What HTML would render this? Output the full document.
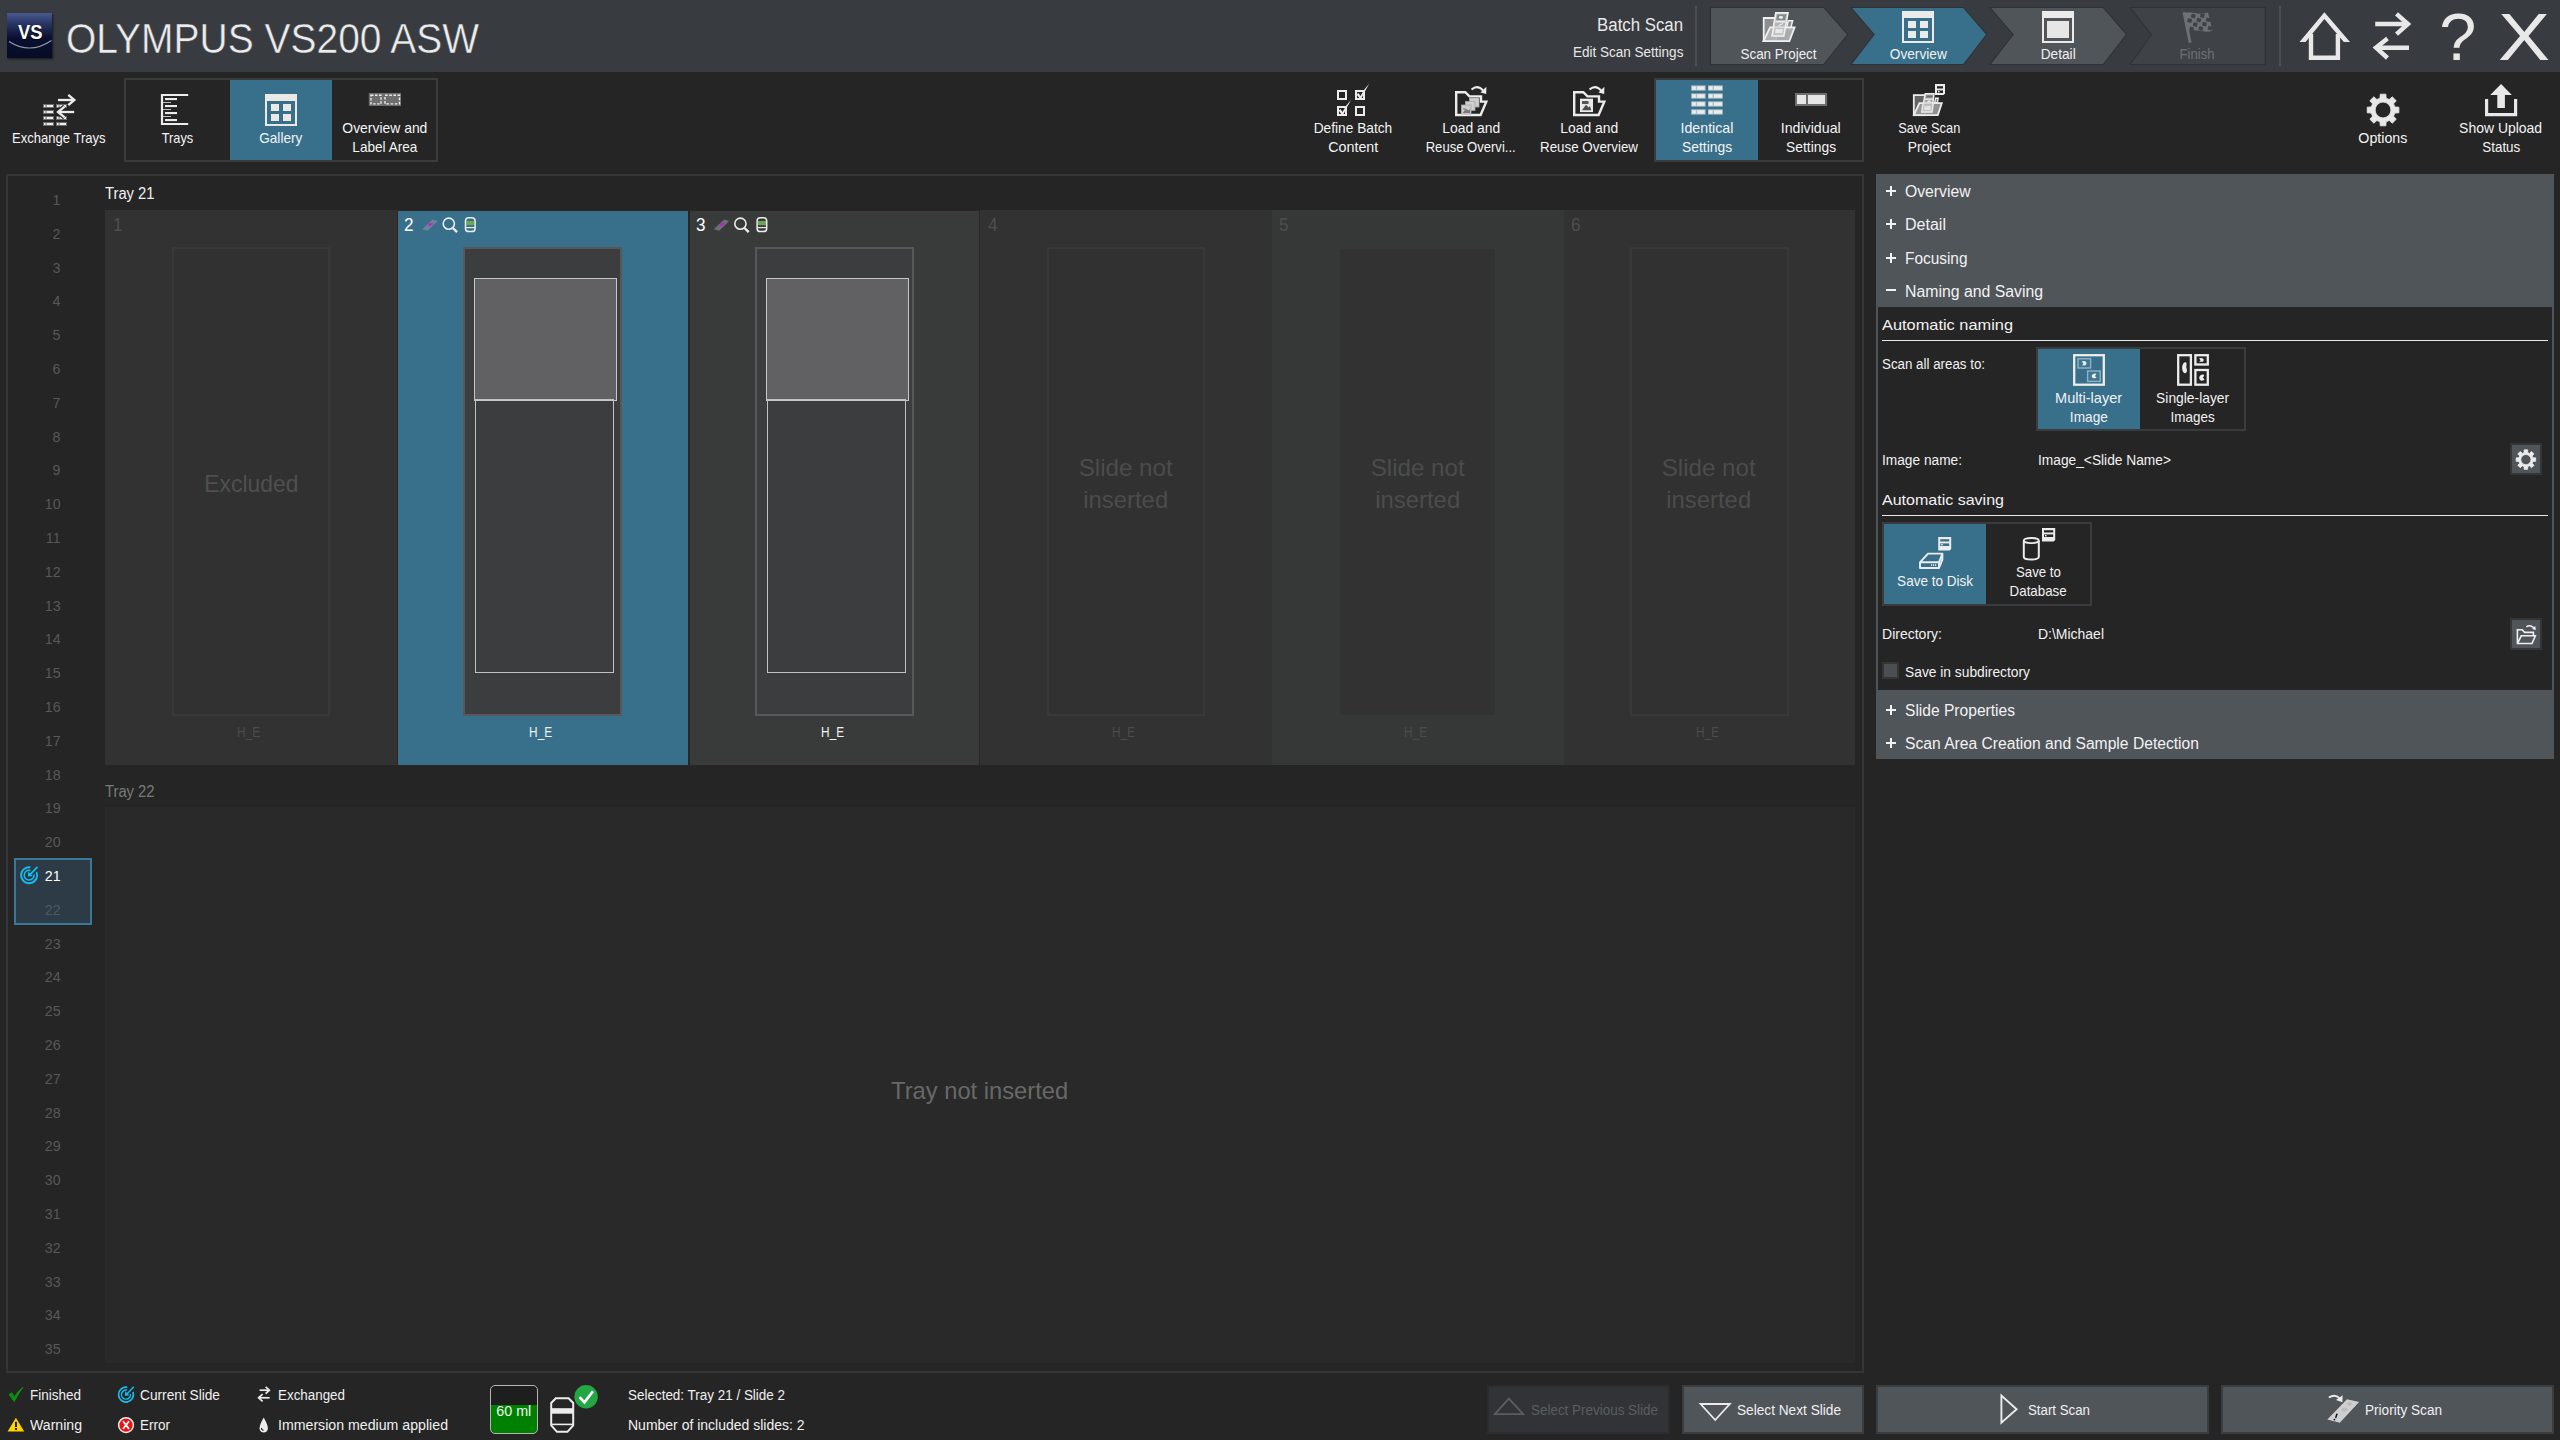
<!DOCTYPE html>
<html lang="en"><head><meta charset="utf-8"><title>OLYMPUS VS200 ASW</title>
<style>
html,body{margin:0;padding:0;background:#252525;overflow:hidden}
body{width:2560px;height:1440px;position:relative;font-family:"Liberation Sans",sans-serif;}
.a{position:absolute;box-sizing:border-box}
.t{position:absolute;white-space:nowrap;line-height:1;display:inline-block}
svg{overflow:visible}
</style></head><body>
<div class="a " style="left:0px;top:0px;width:2560px;height:72px;background:#383b3f;"></div>
<div class="a" style="left:7px;top:13px;width:45px;height:45px;background:linear-gradient(180deg,#4a5a8c 0%,#2a3768 22%,#0a1030 55%,#070b26 100%);box-shadow:1px 1px 2px rgba(0,0,0,.6)"></div>
<span class="t" style="left:17.06px;top:22px;font-size:20px;color:#fff;transform:scaleX(0.9182);transform-origin:50% 0;font-weight:bold;text-shadow:0 1px 1px #000;">VS</span>
<svg class="a" style="left:7px;top:13px;" width="45" height="45" viewBox="0 0 45 45"><path d="M2 28.5 Q23 42 44.5 27.5" fill="none" stroke="#b8bdd0" stroke-width="1.2" opacity=".8"/></svg>
<span class="t" style="left:66.00px;top:17px;font-size:43px;color:#ececec;transform:scaleX(0.9064);transform-origin:0 0;-webkit-text-stroke:0.5px #383b3f;">OLYMPUS VS200 ASW</span>
<span class="t" style="left:1590.94px;top:16px;font-size:18px;color:#e8e8e8;transform:scaleX(0.9342);transform-origin:100% 0;">Batch Scan</span>
<span class="t" style="left:1569.10px;top:45px;font-size:14px;color:#e8e8e8;transform:scaleX(0.9659);transform-origin:100% 0;">Edit Scan Settings</span>
<div class="a " style="left:1695px;top:6px;width:2px;height:60px;background:#4b4e52;"></div>
<div class="a " style="left:2279px;top:6px;width:2px;height:60px;background:#4b4e52;"></div>
<svg class="a" style="left:0px;top:0px;" width="2560" height="72" viewBox="0 0 2560 72"><polygon points="1711.00,8.00 1823.50,8.00 1847.00,34.60 1823.50,63.90 1711.00,63.90" fill="none" stroke="#2f3235" stroke-width="2.2" stroke-linejoin="miter"/><polygon points="1711.00,8.00 1823.50,8.00 1847.00,34.60 1823.50,63.90 1711.00,63.90" fill="#50555a"/><polygon points="1852.00,8.00 1963.20,8.00 1986.00,34.60 1963.20,63.90 1852.00,63.90 1874.80,34.60" fill="none" stroke="#2f3235" stroke-width="2.2" stroke-linejoin="miter"/><polygon points="1852.00,8.00 1963.20,8.00 1986.00,34.60 1963.20,63.90 1852.00,63.90 1874.80,34.60" fill="#38708c"/><polygon points="1991.00,8.00 2103.00,8.00 2125.80,34.60 2103.00,63.90 1991.00,63.90 2013.80,34.60" fill="none" stroke="#2f3235" stroke-width="2.2" stroke-linejoin="miter"/><polygon points="1991.00,8.00 2103.00,8.00 2125.80,34.60 2103.00,63.90 1991.00,63.90 2013.80,34.60" fill="#50555a"/><polygon points="2131.20,8.00 2264.70,8.00 2264.70,63.90 2131.20,63.90 2152.20,34.60" fill="none" stroke="#2f3235" stroke-width="2.2" stroke-linejoin="miter"/><polygon points="2131.20,8.00 2264.70,8.00 2264.70,63.90 2131.20,63.90 2152.20,34.60" fill="#3f4347"/></svg>
<span class="t" style="left:1736.08px;top:46px;font-size:15px;color:#f0f0f0;transform:scaleX(0.8937);transform-origin:50% 0;">Scan Project</span>
<span class="t" style="left:1887.04px;top:46px;font-size:15px;color:#f0f0f0;transform:scaleX(0.9118);transform-origin:50% 0;">Overview</span>
<span class="t" style="left:2038.52px;top:46px;font-size:15px;color:#f0f0f0;transform:scaleX(0.9126);transform-origin:50% 0;">Detail</span>
<span class="t" style="left:2177.49px;top:46px;font-size:15px;color:#6d7175;transform:scaleX(0.8747);transform-origin:50% 0;">Finish</span>
<div class="a " style="left:124px;top:78px;width:314px;height:84px;border:2px solid #3a3b3c;"></div>
<div class="a " style="left:230px;top:80px;width:102px;height:80px;background:#38708c;"></div>
<div class="a " style="left:1654px;top:78px;width:210px;height:84px;border:2px solid #3a3b3c;"></div>
<div class="a " style="left:1656px;top:80px;width:102px;height:80px;background:#38708c;"></div>
<span class="t" style="left:5.22px;top:130px;font-size:15px;color:#f4f4f4;transform:scaleX(0.8693);transform-origin:50% 0;">Exchange Trays</span>
<span class="t" style="left:158.83px;top:130px;font-size:15px;color:#f4f4f4;transform:scaleX(0.8526);transform-origin:50% 0;">Trays</span>
<span class="t" style="left:257.24px;top:130px;font-size:15px;color:#f4f4f4;transform:scaleX(0.9050);transform-origin:50% 0;">Gallery</span>
<span class="t" style="left:338.95px;top:120px;font-size:15px;color:#f4f4f4;transform:scaleX(0.9268);transform-origin:50% 0;">Overview and</span>
<span class="t" style="left:349.14px;top:139px;font-size:15px;color:#f4f4f4;transform:scaleX(0.9062);transform-origin:50% 0;">Label Area</span>
<span class="t" style="left:1310.06px;top:120px;font-size:15px;color:#f4f4f4;transform:scaleX(0.9140);transform-origin:50% 0;">Define Batch</span>
<span class="t" style="left:1326.73px;top:139px;font-size:15px;color:#f4f4f4;transform:scaleX(0.9517);transform-origin:50% 0;">Content</span>
<span class="t" style="left:1439.52px;top:120px;font-size:15px;color:#f4f4f4;transform:scaleX(0.9270);transform-origin:50% 0;">Load and</span>
<span class="t" style="left:1419.12px;top:139px;font-size:15px;color:#f4f4f4;transform:scaleX(0.8707);transform-origin:50% 0;">Reuse Overvi...</span>
<span class="t" style="left:1557.72px;top:120px;font-size:15px;color:#f4f4f4;transform:scaleX(0.9270);transform-origin:50% 0;">Load and</span>
<span class="t" style="left:1533.98px;top:139px;font-size:15px;color:#f4f4f4;transform:scaleX(0.8906);transform-origin:50% 0;">Reuse Overview</span>
<span class="t" style="left:1679.06px;top:120px;font-size:15px;color:#f4f4f4;transform:scaleX(0.9486);transform-origin:50% 0;">Identical</span>
<span class="t" style="left:1679.90px;top:139px;font-size:15px;color:#f4f4f4;transform:scaleX(0.9225);transform-origin:50% 0;">Settings</span>
<span class="t" style="left:1779.11px;top:120px;font-size:15px;color:#f4f4f4;transform:scaleX(0.9467);transform-origin:50% 0;">Individual</span>
<span class="t" style="left:1783.70px;top:139px;font-size:15px;color:#f4f4f4;transform:scaleX(0.9225);transform-origin:50% 0;">Settings</span>
<span class="t" style="left:1892.73px;top:120px;font-size:15px;color:#f4f4f4;transform:scaleX(0.8546);transform-origin:50% 0;">Save Scan</span>
<span class="t" style="left:1905.66px;top:139px;font-size:15px;color:#f4f4f4;transform:scaleX(0.9210);transform-origin:50% 0;">Project</span>
<span class="t" style="left:2357.15px;top:130px;font-size:15px;color:#f4f4f4;transform:scaleX(0.9479);transform-origin:50% 0;">Options</span>
<span class="t" style="left:2456.19px;top:120px;font-size:15px;color:#f4f4f4;transform:scaleX(0.9302);transform-origin:50% 0;">Show Upload</span>
<span class="t" style="left:2479.54px;top:139px;font-size:15px;color:#f4f4f4;transform:scaleX(0.8936);transform-origin:50% 0;">Status</span>
<div class="a " style="left:6px;top:174px;width:1858px;height:1199px;background:#252525;border:2px solid #343536;"></div>
<span class="t" style="left:52.26px;top:192px;font-size:15px;color:#585858;transform:scaleX(0.9500);transform-origin:100% 0;">1</span>
<span class="t" style="left:52.26px;top:226px;font-size:15px;color:#585858;transform:scaleX(0.9500);transform-origin:100% 0;">2</span>
<span class="t" style="left:52.26px;top:260px;font-size:15px;color:#585858;transform:scaleX(0.9500);transform-origin:100% 0;">3</span>
<span class="t" style="left:52.26px;top:293px;font-size:15px;color:#585858;transform:scaleX(0.9500);transform-origin:100% 0;">4</span>
<span class="t" style="left:52.26px;top:327px;font-size:15px;color:#585858;transform:scaleX(0.9500);transform-origin:100% 0;">5</span>
<span class="t" style="left:52.26px;top:361px;font-size:15px;color:#585858;transform:scaleX(0.9500);transform-origin:100% 0;">6</span>
<span class="t" style="left:52.26px;top:395px;font-size:15px;color:#585858;transform:scaleX(0.9500);transform-origin:100% 0;">7</span>
<span class="t" style="left:52.26px;top:429px;font-size:15px;color:#585858;transform:scaleX(0.9500);transform-origin:100% 0;">8</span>
<span class="t" style="left:52.26px;top:462px;font-size:15px;color:#585858;transform:scaleX(0.9500);transform-origin:100% 0;">9</span>
<span class="t" style="left:43.91px;top:496px;font-size:15px;color:#585858;transform:scaleX(0.9500);transform-origin:100% 0;">10</span>
<span class="t" style="left:45.03px;top:530px;font-size:15px;color:#585858;transform:scaleX(0.9500);transform-origin:100% 0;">11</span>
<span class="t" style="left:43.91px;top:564px;font-size:15px;color:#585858;transform:scaleX(0.9500);transform-origin:100% 0;">12</span>
<span class="t" style="left:43.91px;top:598px;font-size:15px;color:#585858;transform:scaleX(0.9500);transform-origin:100% 0;">13</span>
<span class="t" style="left:43.91px;top:631px;font-size:15px;color:#585858;transform:scaleX(0.9500);transform-origin:100% 0;">14</span>
<span class="t" style="left:43.91px;top:665px;font-size:15px;color:#585858;transform:scaleX(0.9500);transform-origin:100% 0;">15</span>
<span class="t" style="left:43.91px;top:699px;font-size:15px;color:#585858;transform:scaleX(0.9500);transform-origin:100% 0;">16</span>
<span class="t" style="left:43.91px;top:733px;font-size:15px;color:#585858;transform:scaleX(0.9500);transform-origin:100% 0;">17</span>
<span class="t" style="left:43.91px;top:767px;font-size:15px;color:#585858;transform:scaleX(0.9500);transform-origin:100% 0;">18</span>
<span class="t" style="left:43.91px;top:800px;font-size:15px;color:#585858;transform:scaleX(0.9500);transform-origin:100% 0;">19</span>
<span class="t" style="left:43.91px;top:834px;font-size:15px;color:#585858;transform:scaleX(0.9500);transform-origin:100% 0;">20</span>
<span class="t" style="left:43.91px;top:902px;font-size:15px;color:#585858;transform:scaleX(0.9500);transform-origin:100% 0;">22</span>
<span class="t" style="left:43.91px;top:936px;font-size:15px;color:#585858;transform:scaleX(0.9500);transform-origin:100% 0;">23</span>
<span class="t" style="left:43.91px;top:969px;font-size:15px;color:#585858;transform:scaleX(0.9500);transform-origin:100% 0;">24</span>
<span class="t" style="left:43.91px;top:1003px;font-size:15px;color:#585858;transform:scaleX(0.9500);transform-origin:100% 0;">25</span>
<span class="t" style="left:43.91px;top:1037px;font-size:15px;color:#585858;transform:scaleX(0.9500);transform-origin:100% 0;">26</span>
<span class="t" style="left:43.91px;top:1071px;font-size:15px;color:#585858;transform:scaleX(0.9500);transform-origin:100% 0;">27</span>
<span class="t" style="left:43.91px;top:1105px;font-size:15px;color:#585858;transform:scaleX(0.9500);transform-origin:100% 0;">28</span>
<span class="t" style="left:43.91px;top:1138px;font-size:15px;color:#585858;transform:scaleX(0.9500);transform-origin:100% 0;">29</span>
<span class="t" style="left:43.91px;top:1172px;font-size:15px;color:#585858;transform:scaleX(0.9500);transform-origin:100% 0;">30</span>
<span class="t" style="left:43.91px;top:1206px;font-size:15px;color:#585858;transform:scaleX(0.9500);transform-origin:100% 0;">31</span>
<span class="t" style="left:43.91px;top:1240px;font-size:15px;color:#585858;transform:scaleX(0.9500);transform-origin:100% 0;">32</span>
<span class="t" style="left:43.91px;top:1274px;font-size:15px;color:#585858;transform:scaleX(0.9500);transform-origin:100% 0;">33</span>
<span class="t" style="left:43.91px;top:1307px;font-size:15px;color:#585858;transform:scaleX(0.9500);transform-origin:100% 0;">34</span>
<span class="t" style="left:43.91px;top:1341px;font-size:15px;color:#585858;transform:scaleX(0.9500);transform-origin:100% 0;">35</span>
<div class="a " style="left:14px;top:858px;width:78px;height:67px;background:#2c3b45;border:2px solid #3a7899;"></div>
<span class="t" style="left:43.91px;top:868px;font-size:15px;color:#fff;transform:scaleX(0.9500);transform-origin:100% 0;">21</span>
<span class="t" style="left:43.91px;top:902px;font-size:15px;color:#4c5a63;transform:scaleX(0.9500);transform-origin:100% 0;">22</span>
<span class="t" style="left:104.50px;top:186px;font-size:16px;color:#f0f0f0;transform:scaleX(0.9226);transform-origin:0 0;">Tray 21</span>
<span class="t" style="left:104.50px;top:784px;font-size:16px;color:#7a7a7a;transform:scaleX(0.9226);transform-origin:0 0;">Tray 22</span>
<div class="a " style="left:105.0px;top:210.2px;width:291.97px;height:555px;background:#323232;"></div>
<span class="t" style="left:112.80px;top:216px;font-size:18px;color:#4e4e4e;transform:scaleX(0.9500);transform-origin:0 0;">1</span>
<div class="a " style="left:171.6px;top:247.3px;width:158.6px;height:468.5px;background:#313131;border:2px solid #383838;"></div>
<span class="t" style="left:235.48px;top:725px;font-size:14px;color:#4c4c4c;transform:scaleX(0.8445);transform-origin:50% 0;">H_E</span>
<span class="t" style="left:201.73px;top:472px;font-size:24px;color:#4f4f4f;transform:scaleX(0.9521);transform-origin:50% 0;">Excluded</span>
<div class="a " style="left:396.97px;top:210.2px;width:291.67px;height:555.4px;background:#38708c;border:1px solid #2a2624;"></div>
<span class="t" style="left:404.47px;top:216px;font-size:18px;color:#fff;transform:scaleX(0.9500);transform-origin:0 0;">2</span>
<div class="a " style="left:463.27px;top:247.2px;width:158.6px;height:468.6px;background:#3c3d3f;border:2px solid #56585a;"></div>
<div class="a " style="left:474.27px;top:277.8px;width:142.6px;height:123px;background:#616163;border:1.4px solid #c6c6c6;"></div>
<div class="a " style="left:474.87px;top:399px;width:139px;height:273.8px;border:1.5px solid #c2c2c2;"></div>
<span class="t" style="left:527.15px;top:725px;font-size:14px;color:#f0f0f0;transform:scaleX(0.8445);transform-origin:50% 0;">H_E</span>
<div class="a " style="left:688.63px;top:210.2px;width:291.67px;height:555.4px;background:#393b3b;border:1px solid #2a2624;"></div>
<span class="t" style="left:696.13px;top:216px;font-size:18px;color:#fff;transform:scaleX(0.9500);transform-origin:0 0;">3</span>
<div class="a " style="left:754.93px;top:247.2px;width:158.6px;height:468.6px;background:#3c3d3f;border:2px solid #56585a;"></div>
<div class="a " style="left:765.93px;top:277.8px;width:142.6px;height:123px;background:#616163;border:1.4px solid #c6c6c6;"></div>
<div class="a " style="left:766.53px;top:399px;width:139px;height:273.8px;border:1.5px solid #c2c2c2;"></div>
<span class="t" style="left:818.82px;top:725px;font-size:14px;color:#f0f0f0;transform:scaleX(0.8445);transform-origin:50% 0;">H_E</span>
<div class="a " style="left:980.3px;top:210.2px;width:291.67px;height:555px;background:#323232;"></div>
<span class="t" style="left:987.80px;top:216px;font-size:18px;color:#4e4e4e;transform:scaleX(0.9500);transform-origin:0 0;">4</span>
<div class="a " style="left:1046.6px;top:247.3px;width:158.6px;height:468.5px;background:#313131;border:2px solid #383838;"></div>
<span class="t" style="left:1110.48px;top:725px;font-size:14px;color:#4c4c4c;transform:scaleX(0.8445);transform-origin:50% 0;">H_E</span>
<span class="t" style="left:1079.00px;top:456px;font-size:24px;color:#4c4c4c;transform:scaleX(1.0064);transform-origin:50% 0;">Slide not</span>
<span class="t" style="left:1083.01px;top:488px;font-size:24px;color:#4c4c4c;transform:scaleX(0.9955);transform-origin:50% 0;">inserted</span>
<div class="a " style="left:1271.97px;top:210.2px;width:291.67px;height:555px;background:#363838;"></div>
<span class="t" style="left:1279.47px;top:216px;font-size:18px;color:#4e4e4e;transform:scaleX(0.9500);transform-origin:0 0;">5</span>
<div class="a " style="left:1339.77px;top:248.6px;width:155.4px;height:466.2px;background:#323232;"></div>
<span class="t" style="left:1402.15px;top:725px;font-size:14px;color:#4c4c4c;transform:scaleX(0.8445);transform-origin:50% 0;">H_E</span>
<span class="t" style="left:1370.67px;top:456px;font-size:24px;color:#4c4c4c;transform:scaleX(1.0064);transform-origin:50% 0;">Slide not</span>
<span class="t" style="left:1374.68px;top:488px;font-size:24px;color:#4c4c4c;transform:scaleX(0.9955);transform-origin:50% 0;">inserted</span>
<div class="a " style="left:1563.63px;top:210.2px;width:291.17px;height:555px;background:#323232;"></div>
<span class="t" style="left:1571.13px;top:216px;font-size:18px;color:#4e4e4e;transform:scaleX(0.9500);transform-origin:0 0;">6</span>
<div class="a " style="left:1629.93px;top:247.3px;width:158.6px;height:468.5px;background:#313131;border:2px solid #383838;"></div>
<span class="t" style="left:1693.82px;top:725px;font-size:14px;color:#4c4c4c;transform:scaleX(0.8445);transform-origin:50% 0;">H_E</span>
<span class="t" style="left:1662.33px;top:456px;font-size:24px;color:#4c4c4c;transform:scaleX(1.0064);transform-origin:50% 0;">Slide not</span>
<span class="t" style="left:1666.34px;top:488px;font-size:24px;color:#4c4c4c;transform:scaleX(0.9955);transform-origin:50% 0;">inserted</span>
<div class="a " style="left:105px;top:807px;width:1750px;height:556px;background:#292929;"></div>
<span class="t" style="left:890.40px;top:1079px;font-size:24px;color:#686868;transform:scaleX(0.9877);transform-origin:50% 0;">Tray not inserted</span>
<div class="a " style="left:1876px;top:174px;width:678px;height:585px;background:#50555a;"></div>
<div class="a " style="left:1878px;top:307px;width:674px;height:383px;background:#252525;"></div>
<div class="a " style="left:1886px;top:189.5px;width:10px;height:2px;background:#f2f2f2;"></div>
<div class="a " style="left:1890px;top:185.5px;width:2px;height:10px;background:#f2f2f2;"></div>
<span class="t" style="left:1905.30px;top:184px;font-size:16px;color:#f2f2f2;transform:scaleX(0.9823);transform-origin:0 0;">Overview</span>
<div class="a " style="left:1886px;top:223.2px;width:10px;height:2px;background:#f2f2f2;"></div>
<div class="a " style="left:1890px;top:219.2px;width:2px;height:10px;background:#f2f2f2;"></div>
<span class="t" style="left:1905.30px;top:217px;font-size:16px;color:#f2f2f2;transform:scaleX(1.0023);transform-origin:0 0;">Detail</span>
<div class="a " style="left:1886px;top:256.8px;width:10px;height:2px;background:#f2f2f2;"></div>
<div class="a " style="left:1890px;top:252.8px;width:2px;height:10px;background:#f2f2f2;"></div>
<span class="t" style="left:1905.30px;top:251px;font-size:16px;color:#f2f2f2;transform:scaleX(0.9627);transform-origin:0 0;">Focusing</span>
<div class="a " style="left:1886px;top:288.8px;width:10px;height:2px;background:#f2f2f2;"></div>
<span class="t" style="left:1905.30px;top:284px;font-size:16px;color:#f2f2f2;transform:scaleX(0.9882);transform-origin:0 0;">Naming and Saving</span>
<div class="a " style="left:1886px;top:709.0px;width:10px;height:2px;background:#f2f2f2;"></div>
<div class="a " style="left:1890px;top:705.0px;width:2px;height:10px;background:#f2f2f2;"></div>
<span class="t" style="left:1905.30px;top:703px;font-size:16px;color:#f2f2f2;transform:scaleX(0.9739);transform-origin:0 0;">Slide Properties</span>
<div class="a " style="left:1886px;top:742.3px;width:10px;height:2px;background:#f2f2f2;"></div>
<div class="a " style="left:1890px;top:738.3px;width:2px;height:10px;background:#f2f2f2;"></div>
<span class="t" style="left:1905.30px;top:736px;font-size:16px;color:#f2f2f2;transform:scaleX(0.9779);transform-origin:0 0;">Scan Area Creation and Sample Detection</span>
<span class="t" style="left:1882.00px;top:317px;font-size:15px;color:#f2f2f2;transform:scaleX(1.0911);transform-origin:0 0;">Automatic naming</span>
<div class="a " style="left:1882px;top:339.5px;width:666px;height:1.5px;background:#e8e8e8;"></div>
<span class="t" style="left:1882.00px;top:357px;font-size:14px;color:#f2f2f2;transform:scaleX(0.9522);transform-origin:0 0;">Scan all areas to:</span>
<div class="a " style="left:2036px;top:347px;width:210px;height:84px;border:2px solid #3a3b3c;"></div>
<div class="a " style="left:2038px;top:349px;width:102px;height:80px;background:#38708c;"></div>
<span class="t" style="left:2053.91px;top:390px;font-size:15px;color:#f2f2f2;transform:scaleX(0.9685);transform-origin:50% 0;">Multi-layer</span>
<span class="t" style="left:2067.65px;top:409px;font-size:15px;color:#f2f2f2;transform:scaleX(0.9115);transform-origin:50% 0;">Image</span>
<span class="t" style="left:2152.90px;top:390px;font-size:15px;color:#f2f2f2;transform:scaleX(0.9216);transform-origin:50% 0;">Single-layer</span>
<span class="t" style="left:2167.90px;top:409px;font-size:15px;color:#f2f2f2;transform:scaleX(0.8945);transform-origin:50% 0;">Images</span>
<span class="t" style="left:1882.00px;top:453px;font-size:14px;color:#f2f2f2;transform:scaleX(0.9790);transform-origin:0 0;">Image name:</span>
<span class="t" style="left:2038.00px;top:453px;font-size:14px;color:#f2f2f2;transform:scaleX(0.9822);transform-origin:0 0;">Image_&lt;Slide Name&gt;</span>
<div class="a " style="left:2510px;top:443.2px;width:32px;height:31.8px;background:#50555a;border:2px solid #343536;"></div>
<span class="t" style="left:1882.00px;top:492px;font-size:15px;color:#f2f2f2;transform:scaleX(1.0681);transform-origin:0 0;">Automatic saving</span>
<div class="a " style="left:1882px;top:514.5px;width:666px;height:1.5px;background:#e8e8e8;"></div>
<div class="a " style="left:1882px;top:522px;width:210px;height:84px;border:2px solid #3a3b3c;"></div>
<div class="a " style="left:1884px;top:524px;width:102px;height:80px;background:#38708c;"></div>
<span class="t" style="left:1892.90px;top:573px;font-size:15px;color:#f2f2f2;transform:scaleX(0.9026);transform-origin:50% 0;">Save to Disk</span>
<span class="t" style="left:2013.07px;top:564px;font-size:15px;color:#f2f2f2;transform:scaleX(0.8846);transform-origin:50% 0;">Save to</span>
<span class="t" style="left:2006.39px;top:583px;font-size:15px;color:#f2f2f2;transform:scaleX(0.8877);transform-origin:50% 0;">Database</span>
<span class="t" style="left:1882.00px;top:627px;font-size:14px;color:#f2f2f2;transform:scaleX(1.0017);transform-origin:0 0;">Directory:</span>
<span class="t" style="left:2038.00px;top:627px;font-size:14px;color:#f2f2f2;transform:scaleX(0.9980);transform-origin:0 0;">D:\Michael</span>
<div class="a " style="left:2510px;top:618.2px;width:32px;height:31.8px;background:#50555a;border:2px solid #343536;"></div>
<div class="a " style="left:1882px;top:662px;width:17px;height:17.4px;background:#4b4f53;border:2px solid #343536;"></div>
<span class="t" style="left:1905.00px;top:665px;font-size:14px;color:#f2f2f2;transform:scaleX(0.9855);transform-origin:0 0;">Save in subdirectory</span>
<span class="t" style="left:30.00px;top:1388px;font-size:14px;color:#f0f0f0;transform:scaleX(0.9637);transform-origin:0 0;">Finished</span>
<span class="t" style="left:30.00px;top:1418px;font-size:14px;color:#f0f0f0;transform:scaleX(1.0075);transform-origin:0 0;">Warning</span>
<span class="t" style="left:140.00px;top:1388px;font-size:14px;color:#f0f0f0;transform:scaleX(0.9791);transform-origin:0 0;">Current Slide</span>
<span class="t" style="left:140.00px;top:1418px;font-size:14px;color:#f0f0f0;transform:scaleX(0.9642);transform-origin:0 0;">Error</span>
<span class="t" style="left:278.00px;top:1388px;font-size:14px;color:#f0f0f0;transform:scaleX(0.9564);transform-origin:0 0;">Exchanged</span>
<span class="t" style="left:278.00px;top:1418px;font-size:14px;color:#f0f0f0;transform:scaleX(1.0115);transform-origin:0 0;">Immersion medium applied</span>
<span class="t" style="left:628.00px;top:1388px;font-size:14px;color:#f0f0f0;transform:scaleX(0.9607);transform-origin:0 0;">Selected: Tray 21 / Slide 2</span>
<span class="t" style="left:628.00px;top:1418px;font-size:14px;color:#f0f0f0;transform:scaleX(0.9991);transform-origin:0 0;">Number of included slides: 2</span>
<div class="a " style="left:1487px;top:1385.2px;width:183.3px;height:48.6px;background:#313336;border:2px solid #2b2c2e;"></div>
<div class="a " style="left:1681.9px;top:1385.2px;width:182.1px;height:48.6px;background:#50555a;border:2px solid #3a3d40;"></div>
<div class="a " style="left:1876px;top:1385.2px;width:332.8px;height:48.6px;background:#50555a;border:2px solid #3a3d40;"></div>
<div class="a " style="left:2221.2px;top:1385.2px;width:332.8px;height:48.6px;background:#50555a;border:2px solid #3a3d40;"></div>
<span class="t" style="left:1531.00px;top:1403px;font-size:14px;color:#5a5e62;transform:scaleX(0.9600);transform-origin:0 0;">Select Previous Slide</span>
<span class="t" style="left:1737.00px;top:1403px;font-size:14px;color:#f0f0f0;transform:scaleX(0.9755);transform-origin:0 0;">Select Next Slide</span>
<span class="t" style="left:2027.50px;top:1403px;font-size:14px;color:#f0f0f0;transform:scaleX(0.9485);transform-origin:0 0;">Start Scan</span>
<span class="t" style="left:2365.00px;top:1403px;font-size:14px;color:#f0f0f0;transform:scaleX(0.9702);transform-origin:0 0;">Priority Scan</span>
<svg class="a" style="left:0px;top:0px;" width="2560" height="72" viewBox="0 0 2560 72"><rect x="1903.0" y="12.0" width="30.0" height="30.0" fill="none" stroke="#ebebeb" stroke-width="2.0"/><rect x="1902" y="11" width="32.0" height="7.0" fill="#ebebeb"/><rect x="1908.0" y="21.0" width="8.0" height="7.0" fill="#ebebeb"/><rect x="1908.0" y="31.0" width="8.0" height="7.0" fill="#ebebeb"/><rect x="1920.0" y="21.0" width="8.0" height="7.0" fill="#ebebeb"/><rect x="1920.0" y="31.0" width="8.0" height="7.0" fill="#ebebeb"/></svg>
<svg class="a" style="left:0px;top:0px;" width="2560" height="72" viewBox="0 0 2560 72"><rect x="2043" y="12" width="30" height="30" fill="none" stroke="#ebebeb" stroke-width="2"/><rect x="2042" y="11" width="32" height="7" fill="#ebebeb"/><rect x="2047" y="21" width="22" height="17" fill="#e6e6e6"/></svg>
<svg class="a" style="left:0px;top:0px;" width="2560" height="72" viewBox="0 0 2560 72"><g transform="translate(1762,12)" stroke-linejoin="miter"><path d="M1.7 6 H14 V29.2 H1.7 Z" fill="#8b8f90" stroke="#f0f0f0" stroke-width="1.8"/><path d="M26.2 8.7 H30.6 L28.6 17 H24.4 Z" fill="#8b8f90" stroke="#f0f0f0" stroke-width="1.5"/><path d="M13.8 0.9 H26 L21.8 24 H9.8 Z" fill="#b4b7b8" stroke="#f0f0f0" stroke-width="1.6"/><path d="M15.4 2.6 H24.2 L23.2 8 H14.4 Z" fill="#858a8b"/><ellipse cx="18.9" cy="5.4" rx="2.1" ry="1.4" fill="#f0f0f0"/><path d="M13.4 9.6 H23 " stroke="#f0f0f0" stroke-width="1.5" fill="none"/><path d="M16 13.6 L21.4 10.6 L20.9 11.9 L17.2 14 Z" fill="#f0f0f0"/><path d="M8.2 15.3 H32.6 L27.4 29.2 H1.4 Z" fill="#b1b3b4" fill-opacity="0.92" stroke="#f0f0f0" stroke-width="1.8"/><path d="M11.6 15.6 L10 24 H21.8 L23.3 15.6" fill="#c2c4c5" stroke="#f0f0f0" stroke-width="1.5"/><path d="M13.8 16.9 H21 L20.3 21 H13.1 Z" fill="#e8e8e8"/></g></svg>
<svg class="a" style="left:0px;top:0px;" width="2560" height="72" viewBox="0 0 2560 72"><g transform="translate(2182,11)"><path d="M0.5 1.5 L3.5 0.8 L9.5 31.5 L6.8 32 Z" fill="#6d7175"/><path d="M3 2 C9 -1 15 5 26 1.5 L30.5 19.5 C22 23 14 17 6.5 20.5 Z" fill="#6d7175"/><rect x="9.6" y="2.8" width="4.2" height="3.9" fill="#3e4246" transform="rotate(12 9.6 2.8)"/><rect x="18.8" y="2.4" width="4.2" height="3.9" fill="#3e4246" transform="rotate(12 18.8 2.4)"/><rect x="6.0" y="7.2" width="4.2" height="3.9" fill="#3e4246" transform="rotate(12 6.0 7.2)"/><rect x="15.2" y="6.8" width="4.2" height="3.9" fill="#3e4246" transform="rotate(12 15.2 6.8)"/><rect x="24.4" y="6.4" width="4.2" height="3.9" fill="#3e4246" transform="rotate(12 24.4 6.4)"/><rect x="11.6" y="11.2" width="4.2" height="3.9" fill="#3e4246" transform="rotate(12 11.6 11.2)"/><rect x="20.8" y="10.8" width="4.2" height="3.9" fill="#3e4246" transform="rotate(12 20.8 10.8)"/><rect x="8.0" y="15.6" width="4.2" height="3.9" fill="#3e4246" transform="rotate(12 8.0 15.6)"/><rect x="17.2" y="15.2" width="4.2" height="3.9" fill="#3e4246" transform="rotate(12 17.2 15.2)"/><rect x="26.4" y="14.8" width="4.2" height="3.9" fill="#3e4246" transform="rotate(12 26.4 14.8)"/></g></svg>
<svg class="a" style="left:0px;top:0px;" width="2560" height="72" viewBox="0 0 2560 72"><polygon points="2299.5,42.1 2324.4,12.2 2350,42.1 2343.8,42.1 2324.4,19 2305.6,42.1" fill="#e8e8e8"/><path d="M2311 34 V57.7 H2337.9 V34" fill="none" stroke="#e8e8e8" stroke-width="4.4"/></svg>
<svg class="a" style="left:0px;top:0px;" width="2560" height="72" viewBox="0 0 2560 72"><g fill="none" stroke="#e8e8e8" stroke-width="4.4" stroke-linejoin="miter"><path d="M2375.2 24 H2408"/><path d="M2396.5 13.8 L2408 24 L2396.5 34.2"/><path d="M2409 47.7 H2376"/><path d="M2387.5 38.6 L2376 47.7 L2387.5 58"/></g></svg>
<span class="t" style="left:2439.37px;top:3px;font-size:67px;color:#e8e8e8;transform:scaleX(0.9929);transform-origin:50% 0;">?</span>
<span class="t" style="left:2501.99px;top:4px;font-size:66px;color:#e8e8e8;transform:scaleX(1.1812);transform-origin:50% 0;">X</span>
<svg class="a" style="left:0px;top:0px;" width="2560" height="180" viewBox="0 0 2560 180"><rect x="43" y="104" width="11" height="4" fill="#6c6c6c"/><rect x="44" y="105" width="1.6" height="2" fill="#ececec"/><rect x="46.6" y="105" width="6.4" height="2" fill="#ececec"/><rect x="56" y="104" width="11" height="4" fill="#6c6c6c"/><rect x="57" y="105" width="1.6" height="2" fill="#ececec"/><rect x="59.6" y="105" width="6.4" height="2" fill="#ececec"/><rect x="43" y="110" width="11" height="4" fill="#6c6c6c"/><rect x="44" y="111" width="1.6" height="2" fill="#ececec"/><rect x="46.6" y="111" width="6.4" height="2" fill="#ececec"/><rect x="43" y="116" width="11" height="4" fill="#6c6c6c"/><rect x="44" y="117" width="1.6" height="2" fill="#ececec"/><rect x="46.6" y="117" width="6.4" height="2" fill="#ececec"/><rect x="56" y="116" width="11" height="4" fill="#6c6c6c"/><rect x="57" y="117" width="1.6" height="2" fill="#ececec"/><rect x="59.6" y="117" width="6.4" height="2" fill="#ececec"/><rect x="43" y="122" width="11" height="4" fill="#6c6c6c"/><rect x="44" y="123" width="1.6" height="2" fill="#ececec"/><rect x="46.6" y="123" width="6.4" height="2" fill="#ececec"/><rect x="56" y="122" width="11" height="4" fill="#6c6c6c"/><rect x="57" y="123" width="1.6" height="2" fill="#ececec"/><rect x="59.6" y="123" width="6.4" height="2" fill="#ececec"/><g fill="none" stroke="#252525" stroke-width="4.6"><path d="M58 100 H74"/><path d="M68.3 95 L74.4 100 L68.3 105"/><path d="M74 112 H58"/><path d="M64.6 106.6 L58 112 L64.6 117.4"/></g><g fill="none" stroke="#ececec" stroke-width="2.3"><path d="M58 100 H74"/><path d="M68.3 94.8 L74.4 100 L68.3 105.2"/><path d="M74.2 112 H58.4"/><path d="M64.6 106.6 L58 112 L64.6 117.4"/></g><path d="M188.2 95 H162 V124 H188.2" fill="none" stroke="#ececec" stroke-width="2.2"/><rect x="165" y="98" width="12" height="2.1" fill="#ececec"/><rect x="165" y="105" width="12" height="2.1" fill="#ececec"/><rect x="165" y="112" width="12" height="2.1" fill="#ececec"/><rect x="165" y="119" width="12" height="2.1" fill="#ececec"/><rect x="163" y="102.0" width="8" height="1" fill="#bdbdbd"/><rect x="163" y="109.0" width="8" height="1" fill="#bdbdbd"/><rect x="163" y="116.0" width="8" height="1" fill="#bdbdbd"/><rect x="266.0" y="95.0" width="30.0" height="30.0" fill="none" stroke="#ece8e6" stroke-width="2.0"/><rect x="265" y="94" width="32.0" height="7.0" fill="#ece8e6"/><rect x="271.0" y="104.0" width="8.0" height="7.0" fill="#ece8e6"/><rect x="271.0" y="114.0" width="8.0" height="7.0" fill="#ece8e6"/><rect x="283.0" y="104.0" width="8.0" height="7.0" fill="#ece8e6"/><rect x="283.0" y="114.0" width="8.0" height="7.0" fill="#ece8e6"/><rect x="368.8" y="93" width="32.2" height="13" fill="#6e6e6e"/><rect x="371" y="95.3" width="10" height="8.6" fill="none" stroke="#ececec" stroke-width="1.4" stroke-dasharray="2.4 1.6"/><rect x="385" y="95.3" width="14.5" height="8.6" fill="none" stroke="#ececec" stroke-width="1.4" stroke-dasharray="2.6 1.6"/><rect x="1338" y="91" width="8" height="8" fill="none" stroke="#ececec" stroke-width="2"/><rect x="1356" y="91" width="8" height="8" fill="none" stroke="#ececec" stroke-width="2"/><rect x="1338" y="107" width="8" height="8" fill="none" stroke="#ececec" stroke-width="2"/><rect x="1356" y="107" width="8" height="8" fill="none" stroke="#ececec" stroke-width="2"/><path d="M1356.6 94.6 L1358.5 93.1 L1360.4 95.9 Q1364 89 1369.2 83.8 Q1365.2 90.6 1361.2 98.8 L1359.8 98.8 Z" fill="#ececec"/><path d="M1338.6 110.6 L1340.5 109.1 L1342.4 111.9 Q1346 105 1351.2 99.8 Q1347.2 106.6 1343.2 114.8 L1341.8 114.8 Z" fill="#ececec"/><path d="M1456.2 92.2 H1465.3 L1469.5 96.4 H1481 V101.6 H1486.3 L1480.6 115 H1456.2 Z" fill="none" stroke="#ececec" stroke-width="2.4" stroke-linejoin="miter"/><path d="M1471.5 89.6 Q1477.5 84.2 1483.3 90.6" fill="none" stroke="#ececec" stroke-width="2"/><polygon points="1480.5,92.6 1486.4,86.8 1486.2,94" fill="#ececec"/><rect x="1469.5" y="98" width="9.5" height="9" fill="#cfcfcf" stroke="#a8a8a8" stroke-width="0.8"/><rect x="1465.5" y="101.5" width="9.5" height="9" fill="#cfcfcf" stroke="#a8a8a8" stroke-width="0.8"/><rect x="1461.5" y="105" width="9.5" height="9" fill="#cfcfcf" stroke="#a8a8a8" stroke-width="0.8"/><path d="M1463 112.5 L1466 108.5 L1468 110.5 L1470 109 V113 H1463 Z" fill="#7a7a7a"/><rect x="1463.3" y="108" width="2" height="1.6" fill="#8a8a8a"/><path d="M1574.2 92.2 H1583.3 L1587.5 96.4 H1599 V101.6 H1604.3 L1598.6 115 H1574.2 Z" fill="none" stroke="#ececec" stroke-width="2.4" stroke-linejoin="miter"/><path d="M1589.5 89.6 Q1595.5 84.2 1601.3 90.6" fill="none" stroke="#ececec" stroke-width="2"/><polygon points="1598.5,92.6 1604.4,86.8 1604.2,94" fill="#ececec"/><rect x="1581" y="99.7" width="11" height="11.4" fill="#e6e6e6" stroke="#ececec" stroke-width="2"/><path d="M1582 110.2 L1586 104.8 L1588.5 107.4 L1590 106 L1591.2 110.2 Z" fill="#4a4a4a"/><rect x="1582" y="101" width="6.5" height="3" fill="#555"/><rect x="1691.2" y="85.40" width="14.4" height="5.3" fill="#aebfc9"/><rect x="1692.1000000000001" y="86.30" width="3.7" height="3.5" fill="#ececec"/><rect x="1697.1000000000001" y="86.30" width="7.6000000000000005" height="3.5" fill="#ececec"/><rect x="1708" y="85.40" width="14.8" height="5.3" fill="#aebfc9"/><rect x="1708.9" y="86.30" width="3.7" height="3.5" fill="#ececec"/><rect x="1713.9" y="86.30" width="8.0" height="3.5" fill="#ececec"/><rect x="1691.2" y="93.37" width="14.4" height="5.3" fill="#aebfc9"/><rect x="1692.1000000000001" y="94.27" width="3.7" height="3.5" fill="#ececec"/><rect x="1697.1000000000001" y="94.27" width="7.6000000000000005" height="3.5" fill="#ececec"/><rect x="1708" y="93.37" width="14.8" height="5.3" fill="#aebfc9"/><rect x="1708.9" y="94.27" width="3.7" height="3.5" fill="#ececec"/><rect x="1713.9" y="94.27" width="8.0" height="3.5" fill="#ececec"/><rect x="1691.2" y="101.34" width="14.4" height="5.3" fill="#aebfc9"/><rect x="1692.1000000000001" y="102.24" width="3.7" height="3.5" fill="#ececec"/><rect x="1697.1000000000001" y="102.24" width="7.6000000000000005" height="3.5" fill="#ececec"/><rect x="1708" y="101.34" width="14.8" height="5.3" fill="#aebfc9"/><rect x="1708.9" y="102.24" width="3.7" height="3.5" fill="#ececec"/><rect x="1713.9" y="102.24" width="8.0" height="3.5" fill="#ececec"/><rect x="1691.2" y="109.31" width="14.4" height="5.3" fill="#aebfc9"/><rect x="1692.1000000000001" y="110.21" width="3.7" height="3.5" fill="#ececec"/><rect x="1697.1000000000001" y="110.21" width="7.6000000000000005" height="3.5" fill="#ececec"/><rect x="1708" y="109.31" width="14.8" height="5.3" fill="#aebfc9"/><rect x="1708.9" y="110.21" width="3.7" height="3.5" fill="#ececec"/><rect x="1713.9" y="110.21" width="8.0" height="3.5" fill="#ececec"/><rect x="1795" y="93" width="32.1" height="13" fill="#6e6e6e"/><rect x="1797" y="95" width="9" height="9" fill="#e6e6e6"/><rect x="1808" y="95" width="17" height="9" fill="#e6e6e6"/><rect x="1913.8" y="95.1" width="11.4" height="20.1" fill="#646464" stroke="#ececec" stroke-width="1.8"/><path d="M1935.6 98.2 H1938.2 L1937.2 103.4 H1934.6 Z" fill="#7a7a7a" stroke="#ececec" stroke-width="1.4"/><path d="M1925.2 93.8 H1934 L1931.8 112 H1921.8 Z" fill="#a6a6a6" stroke="#ececec" stroke-width="1.5"/><path d="M1926.6 95.4 H1932.6 L1932.3 97.4 H1926.3 Z" fill="#6a6a6a"/><path d="M1925 99.2 H1932.6" stroke="#ececec" stroke-width="1.3"/><ellipse cx="1929" cy="101.4" rx="1.6" ry="1" fill="#ececec"/><path d="M1919.4 103.1 H1941.8 L1937.8 115.2 H1913.9 Z" fill="#9a9a9a" fill-opacity="0.93" stroke="#ececec" stroke-width="1.8"/><path d="M1923 103.4 L1921.8 112 H1932 L1933.3 103.4" fill="#bdbdbd" stroke="#ececec" stroke-width="1.4"/><path d="M1924.6 106 H1930.9 L1930.4 110 H1924 Z" fill="#e4e4e4"/><path d="M1935 84 H1945 V93.4 L1943.5 94.9 H1935 Z" fill="#ececec"/><rect x="1937" y="86.2" width="6" height="2.3" fill="#252525"/><rect x="1937" y="90.4" width="6" height="2.6" fill="#252525"/><rect x="1938" y="91" width="1.6" height="1.4" fill="#ececec"/><path d="M2379.96 98.20 L2380.24 94.15 L2385.86 94.15 L2386.14 98.20 L2389.21 99.47 L2392.27 96.80 L2396.25 100.78 L2393.58 103.84 L2394.85 106.91 L2398.90 107.19 L2398.90 112.81 L2394.85 113.09 L2393.58 116.16 L2396.25 119.22 L2392.27 123.20 L2389.21 120.53 L2386.14 121.80 L2385.86 125.85 L2380.24 125.85 L2379.96 121.80 L2376.89 120.53 L2373.83 123.20 L2369.85 119.22 L2372.52 116.16 L2371.25 113.09 L2367.20 112.81 L2367.20 107.19 L2371.25 106.91 L2372.52 103.84 L2369.85 100.78 L2373.83 96.80 L2376.89 99.47 Z M2375.15 110.00 A7.9 7.9 0 1 0 2390.95 110.00 A7.9 7.9 0 1 0 2375.15 110.00 Z" fill="#e8e8e8" fill-rule="evenodd" stroke="#e8e8e8" stroke-width="0.8" stroke-linejoin="round"/><polygon points="2501.05,84 2511.9,94.9 2504.9,94.9 2504.9,107.9 2497.3,107.9 2497.3,94.9 2490.2,94.9" fill="#e8e8e8"/><path d="M2486.6 99 V114.7 H2515.6 V99" fill="none" stroke="#e8e8e8" stroke-width="3.2"/></svg>
<svg class="a" style="left:0px;top:0px;" width="2560" height="300" viewBox="0 0 2560 300"><polygon points="422.1,229.2 432.6,219.6 437.70000000000005,221 427.6,230.8" fill="#6f8196"/><path d="M428.70000000000005 223.2 h4 v1.6 h-2.2 v1.2 h-1.8 Z" fill="#d010d0"/><circle cx="448.8" cy="223.7" r="5.6" fill="none" stroke="#ececec" stroke-width="1.6"/><path d="M452.90000000000003 228 L457.1 232.2" stroke="#ececec" stroke-width="2.4" fill="none"/><rect x="466.20000000000005" y="221" width="8.2" height="4.2" fill="#6aa84f"/><rect x="465.50000000000006" y="217.8" width="9.6" height="13.8" rx="3.2" ry="3.2" fill="none" stroke="#ececec" stroke-width="1.5"/><path d="M465.50000000000006 227.6 H475.1" stroke="#ececec" stroke-width="1.2"/><polygon points="713.7,229.2 724.2,219.6 729.3000000000001,221 719.2,230.8" fill="#6b6d78"/><path d="M720.3000000000001 223.2 h4 v1.6 h-2.2 v1.2 h-1.8 Z" fill="#d010d0"/><circle cx="740.4000000000001" cy="223.7" r="5.6" fill="none" stroke="#ececec" stroke-width="1.6"/><path d="M744.5 228 L748.7 232.2" stroke="#ececec" stroke-width="2.4" fill="none"/><rect x="757.8000000000001" y="221" width="8.2" height="4.2" fill="#6aa84f"/><rect x="757.1" y="217.8" width="9.6" height="13.8" rx="3.2" ry="3.2" fill="none" stroke="#ececec" stroke-width="1.5"/><path d="M757.1 227.6 H766.7" stroke="#ececec" stroke-width="1.2"/></svg>
<svg class="a" style="left:0px;top:800px;" width="200" height="200" viewBox="0 800 200 200"><path d="M30.49 867.32 A8.0 8.0 0 1 0 36.52 872.20" fill="none" stroke="#12bdf0" stroke-width="1.9"/><path d="M30.37 870.47 A4.9 4.9 0 1 0 33.93 874.35" fill="none" stroke="#12bdf0" stroke-width="1.5"/><path d="M37.50 866.80 L30.10 874.60" stroke="#12bdf0" stroke-width="1.7" fill="none"/><polygon points="27.90,876.60 28.30,871.60 32.70,876.00" fill="#12bdf0"/></svg>
<svg class="a" style="left:0px;top:0px;" width="2560" height="700" viewBox="0 0 2560 700"><rect x="2074.2" y="355.2" width="29.6" height="29.5" fill="none" stroke="#f0ece8" stroke-width="2.3"/><rect x="2078" y="358.7" width="12.6" height="9.3" fill="#3f7691" stroke="#8fb3c6" stroke-width="1.4"/><rect x="2087.6" y="371" width="12.6" height="10.4" fill="#3f7691" stroke="#8fb3c6" stroke-width="1.4"/><path d="M2081.6 361.4 q3 -1.2 4.6 0.6 q0.8 2 -0.6 3.2 l-3.6 0.2 l1.4 -2 Z" fill="#ececec"/><path d="M2096.4 373.8 q-3 -0.8 -4.6 1.4 q-0.6 2.4 1.4 3 l3.4 -0.2 l-1.6 -2 Z" fill="#ececec"/><rect x="2178.2" y="355.2" width="12.7" height="29.5" fill="none" stroke="#ececec" stroke-width="2.3"/><rect x="2195.4" y="355.2" width="12.4" height="9.3" fill="none" stroke="#ececec" stroke-width="2.3"/><rect x="2195.4" y="370" width="12.4" height="14.7" fill="none" stroke="#ececec" stroke-width="2.3"/><path d="M2184.8 362.3 q-3.2 1.8 -2.6 7 q0.6 4 3.2 4 q1.8 -0.4 1.6 -3 q-1.4 -3 -0.4 -6.6 q-0.4 -1.8 -1.8 -1.4 Z" fill="#ececec"/><path d="M2199 358.4 q3 -1 4.6 0.8 q0.4 1.6 -0.8 2.6 l-3.6 0 l1.4 -1.6 Z" fill="#ececec"/><path d="M2203.6 374.6 q-3.4 -0.4 -4.4 2.8 q0 3 2.8 3.4 q2 -0.2 2.6 -1.6 l-2 -1.8 l1.6 -1.4 Z" fill="#ececec"/><path d="M2524.08 452.63 L2524.17 449.85 L2527.63 449.85 L2527.72 452.63 L2529.54 453.39 L2531.57 451.49 L2534.01 453.93 L2532.11 455.96 L2532.87 457.78 L2535.65 457.87 L2535.65 461.33 L2532.87 461.42 L2532.11 463.24 L2534.01 465.27 L2531.57 467.71 L2529.54 465.81 L2527.72 466.57 L2527.63 469.35 L2524.17 469.35 L2524.08 466.57 L2522.26 465.81 L2520.23 467.71 L2517.79 465.27 L2519.69 463.24 L2518.93 461.42 L2516.15 461.33 L2516.15 457.87 L2518.93 457.78 L2519.69 455.96 L2517.79 453.93 L2520.23 451.49 L2522.26 453.39 Z M2520.80 459.60 A5.1 5.1 0 1 0 2531.00 459.60 A5.1 5.1 0 1 0 2520.80 459.60 Z" fill="#ededed" fill-rule="evenodd" stroke="#ededed" stroke-width="0.8" stroke-linejoin="round"/><path d="M2533.4 635 V632.4 H2524.6 L2522.2 629.8 H2517.4 V643.5 H2532 L2535.3 635.8 H2521.2 L2517.8 643" fill="none" stroke="#f0f0f0" stroke-width="1.6" stroke-linejoin="miter"/><path d="M2526.3 626.9 Q2530 624.2 2533.8 627.8" fill="none" stroke="#f0f0f0" stroke-width="1.4"/><polygon points="2532,628.9 2535.2,626 2535.9,630" fill="#f0f0f0"/><path d="M1938.2 537 H1951.2 V549.1 L1949.7 550.6 H1938.2 Z" fill="#ececec"/><rect x="1940.2" y="539.2" width="9" height="2.3" fill="#38708c"/><rect x="1940.2" y="543.4" width="9" height="2.6" fill="#38708c"/><rect x="1941.2" y="544" width="1.6" height="1.4" fill="#ececec"/><path d="M1920 562.3 H1939 V568 H1920 Z M1920 562.3 L1928 553.6 H1942.4 L1939 562.3 M1942.4 553.6 V559.6 L1939 568" fill="none" stroke="#ececec" stroke-width="1.9" stroke-linejoin="round"/><rect x="1931" y="564.3" width="1.2" height="1.6" fill="#ececec"/><rect x="1933" y="564.3" width="1.2" height="1.6" fill="#ececec"/><rect x="1935" y="564.3" width="1.2" height="1.6" fill="#ececec"/><path d="M2042 528 H2055.2 V540.1 L2053.7 541.6 H2042 Z" fill="#ececec"/><rect x="2044" y="530.2" width="9.2" height="2.3" fill="#252525"/><rect x="2044" y="534.4" width="9.2" height="2.6" fill="#252525"/><rect x="2045" y="535" width="1.6" height="1.4" fill="#ececec"/><path d="M2023.8 540.6 V557 A7.5 2.6 0 0 0 2038.8 557 V540.6" fill="none" stroke="#ececec" stroke-width="2"/><ellipse cx="2031.3" cy="540.6" rx="7.5" ry="2.6" fill="none" stroke="#ececec" stroke-width="1.8"/></svg>
<svg class="a" style="left:0px;top:1380px;" width="700" height="60" viewBox="0 1380 700 60"><path d="M9 1394.6 L11.8 1392.8 L14.3 1397 Q17.8 1390.8 23 1387.2 Q18.2 1394 14.2 1401.6 Z" fill="#0a8f12" stroke="#0a8f12" stroke-width="0.9" stroke-linejoin="round"/><polygon points="15.9,1417.8 24.2,1431.6 7.6,1431.6" fill="#ffd400"/><rect x="15" y="1421.8" width="1.9" height="5.2" fill="#111"/><rect x="15" y="1428" width="1.9" height="1.9" fill="#111"/><path d="M127.29 1387.27 A7.44 7.44 0 1 0 132.90 1391.81" fill="none" stroke="#12bdf0" stroke-width="1.767"/><path d="M127.18 1390.20 A4.557 4.557 0 1 0 130.49 1393.81" fill="none" stroke="#12bdf0" stroke-width="1.395"/><path d="M133.81 1386.79 L126.93 1394.04" stroke="#12bdf0" stroke-width="1.581" fill="none"/><polygon points="124.88,1395.90 125.26,1391.25 129.35,1395.34" fill="#12bdf0"/><circle cx="126" cy="1425.1" r="7.4" fill="#ee1111" stroke="#eaeaea" stroke-width="1.5"/><path d="M123 1421.3 L129 1428.9 M129 1421.3 L123 1428.9" stroke="#fff" stroke-width="1.8" fill="none"/><g fill="none" stroke="#ececec" stroke-width="1.7"><path d="M259.6 1390.2 H269"/><path d="M265.6 1386.8 L269.4 1390.2 L265.6 1393.6"/><path d="M269.6 1397.8 H259"/><path d="M262.6 1394.2 L258.6 1397.8 L262.6 1401.4"/></g><path d="M263.7 1417.6 Q267.9 1425 267.9 1428.4 A4.2 4.2 0 0 1 259.5 1428.4 Q259.5 1425 263.7 1417.6 Z" fill="#ececec"/><path d="M261.6 1428 a1.6 1.6 0 0 0 2 2" fill="none" stroke="#252525" stroke-width="1.2"/></svg>
<div class="a" style="left:490px;top:1385px;width:48px;height:48.5px;border:1.5px solid #b4b4b4;border-radius:5px;background:linear-gradient(180deg,#1e1e1e 0,#1e1e1e 41%,#008000 41%,#008000 100%);"></div>
<span class="t" style="left:496.47px;top:1404px;font-size:14.5px;color:#eef5ee;transform:scaleX(0.9871);transform-origin:50% 0;">60 ml</span>
<svg class="a" style="left:0px;top:1380px;" width="2560" height="60" viewBox="0 1380 2560 60"><path d="M555.8 1398.2 H568.6 L573.2 1403 V1425.4 L567.4 1431.8 H557 L551.2 1425.4 V1403 Z" fill="none" stroke="#ececec" stroke-width="2"/><rect x="551.2" y="1408.2" width="22" height="5.5" fill="#ececec"/><path d="M551.2 1424.4 H573.2" stroke="#ececec" stroke-width="1.6"/><circle cx="586.1" cy="1396.8" r="11.7" fill="#22a744"/><path d="M579.6 1397.2 L584.4 1402.4 L593 1391.2" fill="none" stroke="#fff" stroke-width="2.6"/><polygon points="1508.9,1398.6 1523.2,1414.2 1494.8,1414.2" fill="none" stroke="#5a5e62" stroke-width="1.8"/><polygon points="1700.6,1404 1729.8,1404 1715.2,1420" fill="none" stroke="#ececec" stroke-width="1.8"/><polygon points="2001.4,1395.6 2001.4,1422.6 2016.6,1409.2" fill="none" stroke="#ececec" stroke-width="1.9"/><polygon points="2347,1399.3 2359.1,1402 2339.8,1422.7 2327.3,1419.6" fill="#cfcfcf"/><ellipse cx="2349.6" cy="1404" rx="2.6" ry="1.8" fill="#bdbdbd"/><ellipse cx="2344.6" cy="1409.4" rx="3" ry="2" fill="#bcbcbc"/><path d="M2336.2 1413.6 l1.6 0.4 l-1.6 4.2 l-1.2 -0.3 Z" fill="#111"/><circle cx="2334.4" cy="1419.6" r="0.9" fill="#111"/><path d="M2328.8 1397.6 Q2335 1393.6 2339.6 1398.4" fill="none" stroke="#ececec" stroke-width="1.8"/><polygon points="2336,1400 2342.6,1395.2 2342.4,1402.2" fill="#ececec"/></svg>
</body></html>
